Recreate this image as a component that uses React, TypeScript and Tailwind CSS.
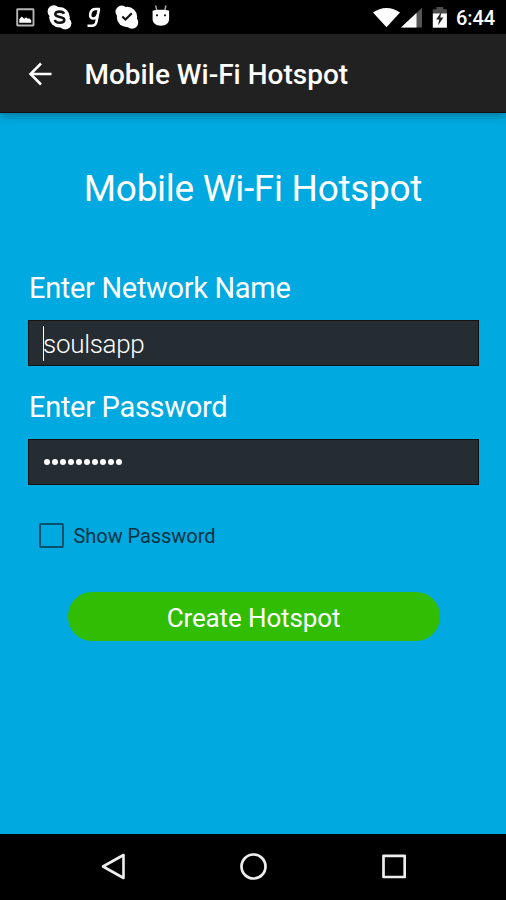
function StatusBar() {
  return (
    <div className="flex h-[34px] shrink-0 items-center bg-black text-white">
      <svg width="190" height="34" viewBox="0 0 190 34" fill="none">
        <rect x="17.2" y="9.2" width="16.300" height="16.300" rx="0.500" stroke="#b5b5b5" strokeWidth="1.900" />
        <path d="M19.300 22.800V19.300l2.400-2.800 2.500 2.300 2-1.500 1.500 1.500 1.500-.5 2 2v2.500z" fill="#fff" />
        <circle cx="59.5" cy="17.300" r="10.300" fill="#fff" />
        <circle cx="53.8" cy="11.400" r="6.200" fill="#fff" />
        <circle cx="65.2" cy="23.300" r="6.200" fill="#fff" />
        <path d="M64 13.800c-.6-1.600-2.200-2.200-4.300-2.200-2.600 0-4.400 1-4.400 2.700 0 3.600 9 1.700 9 5.500 0 2-2 3-4.700 3-2.600 0-4.400-1-4.700-2.900" stroke="#111" strokeWidth="2.600" />
        <path d="M100 9h-4.500c-2.700 0-4.700 2-5.200 4.800-.5 2.800.4 4.700 2.700 4.700s4.200-1.800 4.900-4.500L99 9l-2.500 12.500c-.6 3-2 4.300-4.600 4.300h-4.400" stroke="#fff" strokeWidth="2.600" />
        <circle cx="127" cy="17" r="10.200" fill="#fff" />
        <circle cx="121.700" cy="11.800" r="6.200" fill="#fff" />
        <circle cx="132" cy="22.500" r="6.200" fill="#fff" />
        <path d="M122.300 16.500l3.200 3 6.300-6.200" stroke="#111" strokeWidth="2.200" />
        <path d="M155.600 5.500l1.400 5.500M166 5.500l-1.400 5.500" stroke="#aaa" strokeWidth="1.400" />
        <path d="M152.600 10.800c4-1.400 12.600-1.400 16.500 0V19c0 4-3.300 6.700-8.200 6.700s-8.300-2.700-8.300-6.700z" fill="#fff" />
        <circle cx="157" cy="15.300" r="1.100" fill="#111" />
        <circle cx="165" cy="15.300" r="1.100" fill="#111" />
      </svg>
      <svg className="ml-auto" width="90" height="34" viewBox="366 0 90 34">
        <path d="M373 12.600c7.500-6.300 19.500-6.300 27 0L386.500 27.200z" fill="#fff" />
        <path d="M422 7.800v19.800h-21z" fill="#555" />
        <path d="M416.500 13.100v14.500H401z" fill="#fff" />
        <path d="M432.800 9.200h3.700V7h6.700v2.200h3.700V14h-14.100z" fill="#4d4d4d" />
        <path d="M432.800 13.500h14.100v14.200h-14.100z" fill="#fff" />
        <path d="M441.500 11.500l-5.300 8h3l-1.200 6 5.500-8h-3.200z" fill="#222" />
      </svg>
      <span className="w-[50px] pt-[3px] text-[20px] leading-[31px] font-medium tracking-[-0.100px]">6:44</span>
    </div>
  );
}

function AppBar() {
  return (
    <header className="relative flex h-[79px] shrink-0 items-center border-b-[1.500px] border-[#151010] bg-[#212121] pl-[28px] shadow-[0_2px_9px_rgba(0,0,0,0.35)]">
      <svg className="mt-px" width="24" height="24" viewBox="0 0 24 24" fill="none" stroke="#fff" strokeWidth="2.500">
        <path d="M13 1.500L2.500 12 13 22.500M2.500 12H23.500" />
      </svg>
      <h1 className="ml-[32.500px] pt-1 text-[28px] leading-8 font-medium whitespace-nowrap text-white">Mobile Wi-Fi Hotspot</h1>
    </header>
  );
}

function NavigationBar() {
  return (
    <nav className="flex h-[66px] shrink-0 items-center justify-between bg-black px-[100px]">
      <svg width="26" height="28" viewBox="0 0 26 28" fill="none" stroke="#eee" strokeWidth="2.600" strokeLinejoin="round">
        <path d="M23.500 2v23L3 13.500z" />
      </svg>
      <svg width="28" height="28" viewBox="0 0 28 28" fill="none" stroke="#eee" strokeWidth="2.700">
        <circle cx="14.500" cy="13.500" r="12" />
      </svg>
      <svg width="26" height="28" viewBox="0 0 26 28" fill="none" stroke="#eee" strokeWidth="2.700" strokeLinejoin="round">
        <rect x="3.500" y="2.800" width="21.200" height="21.200" />
      </svg>
    </nav>
  );
}

export default function App() {
  return (
    <div className="flex h-[900px] w-[506px] flex-col overflow-hidden bg-[#00a9df] font-['Roboto',sans-serif]">
      <StatusBar />
      <AppBar />
      <main className="flex flex-1 flex-col px-7 pt-[53px]">
        <h2 className="text-center text-[37px] leading-[46px] tracking-[-0.300px] whitespace-nowrap text-white">Mobile Wi-Fi Hotspot</h2>
        <label className="mt-[58px] pl-px text-[29px] leading-[36px] tracking-[-0.320px] text-white">Enter Network Name</label>
        <div className="mt-[14px] flex h-[46px] w-[451px] items-center border border-[#141313] bg-[#252c32] pl-[14px]">
          <i className="h-[35px] w-px bg-white" />
          <span className="-ml-px pt-[2px] text-[26px] leading-8 font-light tracking-[-0.300px] text-white">soulsapp</span>
        </div>
        <label className="mt-[23px] pl-px text-[29px] leading-[36px] tracking-[-0.300px] text-white">Enter Password</label>
        <div className="mt-[14px] flex h-[46px] w-[451px] items-center gap-[2px] border border-[#141313] bg-[#252c32] pl-[15px]">
          {Array.from({ length: 10 }, (_, i) => (
            <i key={i} className="size-[6px] rounded-full bg-white" />
          ))}
        </div>
        <div className="mt-[37px] ml-[10.500px] flex h-[26px] items-center">
          <span className="size-[25px] rounded-[2px] border-[2px] border-[#075069]" />
          <span className="ml-[10px] pt-[2px] text-[20px] leading-6 tracking-[-0.050px] text-[#053344]">Show Password</span>
        </div>
        <button className="mt-[44px] ml-[39.500px] h-[49px] w-[372px] rounded-[24px] bg-[#30bd04] pt-[4px] text-[26px] leading-[45px] tracking-[-0.120px] text-white">Create Hotspot</button>
      </main>
      <NavigationBar />
    </div>
  );
}
